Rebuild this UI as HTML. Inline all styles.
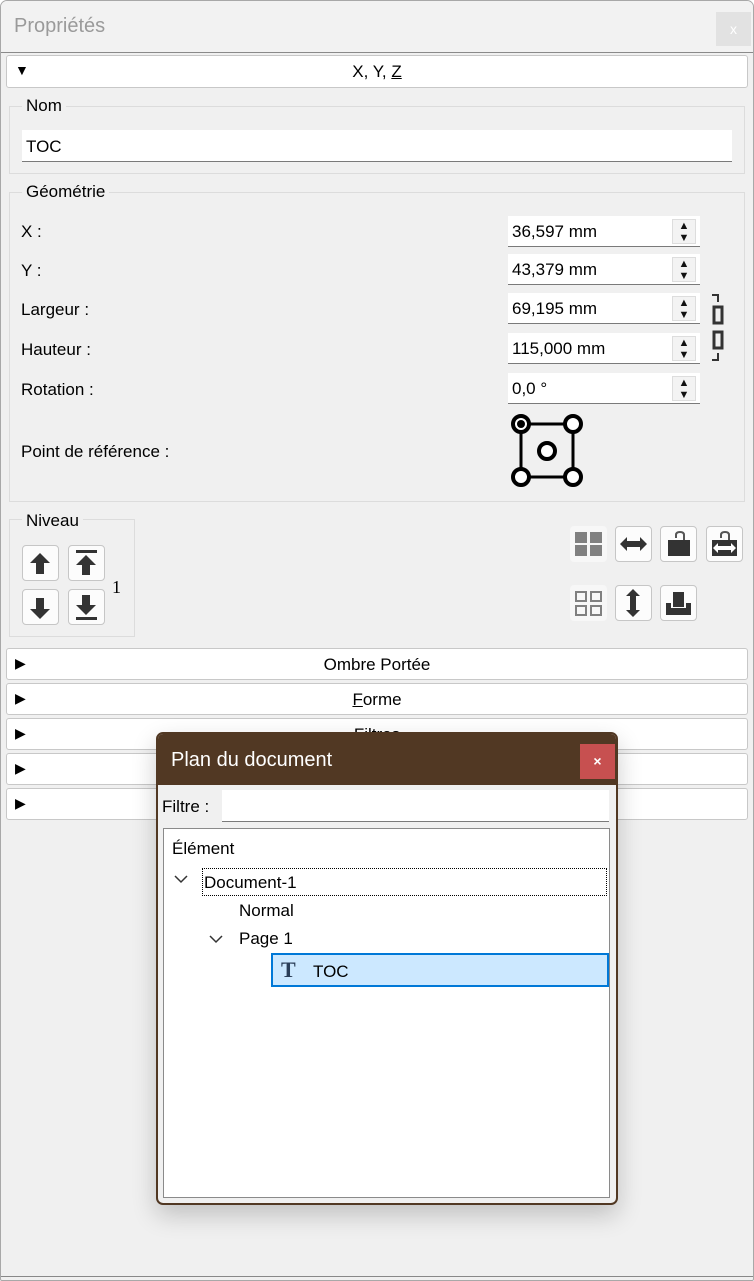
<!DOCTYPE html>
<html><head><meta charset="utf-8"><style>
*{box-sizing:border-box;margin:0;padding:0}
body{width:754px;height:1281px;background:#fff;font-family:"Liberation Sans","DejaVu Sans",sans-serif;font-size:17px;color:#000;position:relative;overflow:hidden}
.a{position:absolute}
.win{left:0;top:0;width:754px;height:1281px;border:1px solid #a8a8a8;border-radius:7px 7px 2px 2px;background:#f0f0f0;overflow:hidden}
.tb{left:-1px;top:-1px;width:754px;height:53px;background:#f2f2f2;border-bottom:1px solid #8a8a8a}
.sec{left:5px;width:742px;height:32px;background:#fff;border:1px solid #c8c8c8;border-radius:3px}
.sec .tri{position:absolute;left:8px;top:6px;font-size:14px}
.sec .lb{position:absolute;left:0;right:0;top:6px;text-align:center}
.gb{border:1px solid #dcdcdc}
.gl{background:#f0f0f0;padding:0 4px}
.inp{background:#fff;border-bottom:1px solid #7a7a7a}
.spin{left:507px;width:192px;height:31px;background:#fff;border-bottom:1px solid #7a7a7a}
.spin span{position:absolute;left:4px;top:6px}
.spin .b{position:absolute;right:4px;top:3px;width:24px;height:25px;background:#f3f3f3;border:1px solid #ddd;font-size:11px;text-align:center;line-height:12px;color:#111}
.btn{width:37px;height:36px;background:#fcfcfc;border:1px solid #c6c6c6;border-radius:4px}
.btnf{width:37px;height:36px;background:#f7f7f7;border-radius:4px}
</style></head><body>
<div class="a win">
<div class="a tb"><div class="a" style="left:14px;top:15px;font-size:20px;color:#9a9a9a">Propriétés</div>
<div class="a" style="left:716px;top:12px;width:35px;height:34px;background:#e2e2e2;color:#fff;font-size:14px;text-align:center;line-height:34px">x</div></div>

<div class="a sec" style="top:54px;height:33px"><span class="tri">▼</span><span class="lb">X, Y, <u>Z</u></span></div>

<div class="a gb" style="left:8px;top:105px;width:736px;height:68px"></div>
<div class="a gl" style="left:21px;top:95px">Nom</div>
<div class="a inp" style="left:21px;top:129px;width:710px;height:32px"><span class="a" style="left:4px;top:7px">TOC</span></div>

<div class="a gb" style="left:8px;top:191px;width:736px;height:310px"></div>
<div class="a gl" style="left:21px;top:181px">Géométrie</div>
<div class="a" style="left:20px;top:221px">X :</div>
<div class="a" style="left:20px;top:260px">Y :</div>
<div class="a" style="left:20px;top:299px">Largeur :</div>
<div class="a" style="left:20px;top:339px">Hauteur :</div>
<div class="a" style="left:20px;top:379px">Rotation :</div>
<div class="a" style="left:20px;top:441px">Point de référence :</div>
<div class="a spin" style="top:215px"><span>36,597 mm</span><div class="b">▲<br>▼</div></div>
<div class="a spin" style="top:253px"><span>43,379 mm</span><div class="b">▲<br>▼</div></div>
<div class="a spin" style="top:292px"><span>69,195 mm</span><div class="b">▲<br>▼</div></div>
<div class="a spin" style="top:332px"><span>115,000 mm</span><div class="b">▲<br>▼</div></div>
<div class="a spin" style="top:372px"><span>0,0 °</span><div class="b">▲<br>▼</div></div>
<svg class="a" style="left:707px;top:291px" width="20" height="72"><path d="M4 3H10V10" fill="none" stroke="#333" stroke-width="2"/><rect x="6" y="15" width="8" height="16" fill="none" stroke="#333" stroke-width="3"/><rect x="6" y="40" width="8" height="16" fill="none" stroke="#333" stroke-width="3"/><path d="M10 61V68H4" fill="none" stroke="#333" stroke-width="2"/></svg>
<svg class="a" style="left:507px;top:411px" width="80" height="78"><rect x="13" y="12" width="52" height="53" fill="none" stroke="#000" stroke-width="3"/><g fill="#fff" stroke="#000" stroke-width="4"><circle cx="13" cy="12" r="8"/><circle cx="65" cy="12" r="8"/><circle cx="13" cy="65" r="8"/><circle cx="65" cy="65" r="8"/><circle cx="39" cy="39" r="8"/></g><circle cx="13" cy="12" r="4" fill="#000"/></svg>

<div class="a gb" style="left:8px;top:518px;width:126px;height:118px"></div>
<div class="a gl" style="left:21px;top:510px">Niveau</div>
<div class="a btn" style="left:21px;top:544px"><svg width="35" height="34"><path d="M17 7L27 17H21V28H13V17H7Z" fill="#333"/></svg></div>
<div class="a btn" style="left:67px;top:544px"><svg width="35" height="34"><rect x="7" y="4" width="21" height="3" fill="#333"/><path d="M17 9L27 19H21V29H13V19H7Z" fill="#333"/></svg></div>
<div class="a btn" style="left:21px;top:588px"><svg width="35" height="34"><path d="M17 29L27 19H21V8H13V19H7Z" fill="#333"/></svg></div>
<div class="a btn" style="left:67px;top:588px"><svg width="35" height="34"><path d="M17 25L27 15H21V5H13V15H7Z" fill="#333"/><rect x="7" y="27" width="21" height="3" fill="#333"/></svg></div>
<div class="a" style="left:111px;top:576px;font-family:'Liberation Serif',serif;font-size:18px">1</div>

<div class="a btnf" style="left:569px;top:525px"><svg width="37" height="36"><g fill="#808080"><rect x="5" y="6" width="12" height="11"/><rect x="20" y="6" width="12" height="11"/><rect x="5" y="19" width="12" height="11"/><rect x="20" y="19" width="12" height="11"/></g></svg></div>
<div class="a btn" style="left:614px;top:525px"><svg width="35" height="34"><path d="M4 17L11 10V14H24V10L31 17L24 24V20H11V24Z" fill="#333"/></svg></div>
<div class="a btn" style="left:659px;top:525px"><svg width="35" height="34"><path d="M15 11V8Q15 5 19 5Q23 5 23 8V13" fill="none" stroke="#555" stroke-width="2"/><rect x="7" y="13" width="22" height="16" fill="#333"/></svg></div>
<div class="a btn" style="left:705px;top:525px"><svg width="35" height="34"><path d="M14 11V8Q14 5 18 5Q22 5 22 8V13" fill="none" stroke="#555" stroke-width="2"/><rect x="5" y="13" width="25" height="16" fill="#333"/><path d="M6 21L11 16V19H24V16L29 21L24 26V23H11V26Z" fill="#fff"/></svg></div>
<div class="a btnf" style="left:569px;top:584px"><svg width="37" height="36"><g fill="none" stroke="#808080" stroke-width="2"><rect x="6" y="7" width="10" height="9"/><rect x="21" y="7" width="10" height="9"/><rect x="6" y="21" width="10" height="9"/><rect x="21" y="21" width="10" height="9"/></g></svg></div>
<div class="a btn" style="left:614px;top:584px"><svg width="35" height="34"><path d="M17 3L24 10H20V24H24L17 31L10 24H14V10H10Z" fill="#333"/></svg></div>
<div class="a btn" style="left:659px;top:584px"><svg width="35" height="34"><rect x="12" y="6" width="11" height="15" fill="#333"/><path d="M5 17H10V22H25V17H30V29H5Z" fill="#333"/></svg></div>

<div class="a sec" style="top:647px"><span class="tri">▶</span><span class="lb">Ombre Portée</span></div>
<div class="a sec" style="top:682px"><span class="tri">▶</span><span class="lb"><u>F</u>orme</span></div>
<div class="a sec" style="top:717px"><span class="tri">▶</span><span class="lb">Filtres</span></div>
<div class="a sec" style="top:752px"><span class="tri">▶</span></div>
<div class="a sec" style="top:787px"><span class="tri">▶</span></div>
<div class="a" style="left:0;top:1275px;width:754px;height:1px;background:#888"></div>
</div>

<div class="a" style="left:156px;top:732px;width:462px;height:473px;background:#f0f0f0;border:2px solid #513823;border-radius:7px;box-shadow:0 10px 25px rgba(0,0,0,0.2);overflow:hidden">
<div class="a" style="left:-2px;top:-2px;width:462px;height:53px;background:#513823"></div>
<div class="a" style="left:13px;top:15px;color:#fff;font-size:20px">Plan du document</div>
<div class="a" style="left:422px;top:10px;width:35px;height:35px;background:#c75050;color:#fff;font-size:14px;text-align:center;line-height:35px;font-weight:bold">×</div>
<div class="a" style="left:4px;top:63px">Filtre :</div>
<div class="a inp" style="left:64px;top:56px;width:387px;height:32px"></div>
<div class="a" style="left:5px;top:94px;width:447px;height:370px;background:#fff;border:1px solid #8a8a8a"></div>
<div class="a" style="left:14px;top:105px">Élément</div>
<svg class="a" style="left:16px;top:140px" width="14" height="10"><path d="M1 2L7 8L13 2" fill="none" stroke="#333" stroke-width="1.5"/></svg>
<div class="a" style="left:44px;top:134px;width:405px;height:28px;border:1.5px dotted #000"></div>
<div class="a" style="left:46px;top:139px">Document-1</div>
<div class="a" style="left:81px;top:167px">Normal</div>
<svg class="a" style="left:51px;top:200px" width="14" height="10"><path d="M1 2L7 8L13 2" fill="none" stroke="#333" stroke-width="1.5"/></svg>
<div class="a" style="left:81px;top:195px">Page 1</div>
<div class="a" style="left:113px;top:219px;width:338px;height:34px;background:#cce8ff;border:2px solid #0078d7"></div>
<div class="a" style="left:123px;top:223px;font-family:'Liberation Serif',serif;font-weight:bold;font-size:22px;color:#2b3e58">T</div>
<div class="a" style="left:155px;top:228px">TOC</div>
</div>
</body></html>
